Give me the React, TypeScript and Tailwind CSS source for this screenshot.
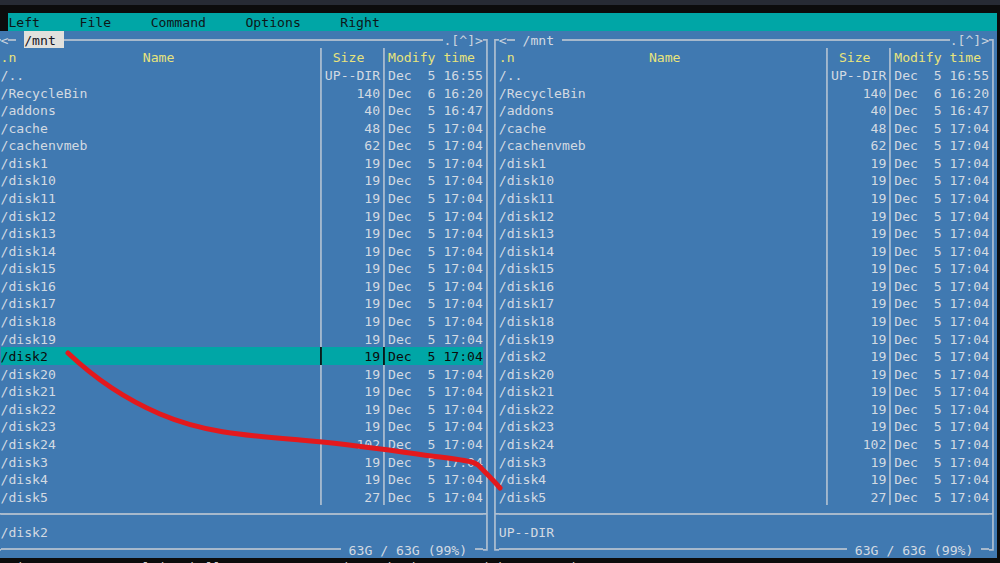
import React from 'react'

const LINE = '#aebfd1'

type K = 'v' | 'tl' | 'tr' | 'bl' | 'br' | 'lt' | 'rt'
const arms: Record<K, string> = { v: 'ud', tl: 'rd', tr: 'ld', bl: 'ru', br: 'lu', lt: 'udr', rt: 'udl' }

// one terminal cell holding a box-drawing glyph
function Box({ k, color = LINE }: { k: K; color?: string }) {
  const a = arms[k]
  const cx = 3.955
  const cy = 8.79
  const d = [
    a.includes('u') ? `M${cx} ${cy}V0` : '',
    a.includes('d') ? `M${cx} ${cy}V17.58` : '',
    a.includes('l') ? `M${cx} ${cy}H0` : '',
    a.includes('r') ? `M${cx} ${cy}H7.91` : '',
  ].join('')
  return (
    <svg width="7.91" height="17.58" viewBox="0 0 7.91 17.58" className="block shrink-0">
      <path d={d} stroke={color} strokeWidth="1.7" fill="none" strokeLinecap="square" />
    </svg>
  )
}

function HLine({ one }: { one?: boolean }) {
  return (
    <div className={one ? 'w-[7.91px] shrink-0 flex items-center' : 'flex-1 flex items-center'}>
      <div className="h-[2px] w-full bg-[#a7b9cc]" />
    </div>
  )
}

type Row = [string, string, string]

const files: Row[] = [
  ['/..', 'UP--DIR', 'Dec  5 16:55'],
  ['/RecycleBin', '140', 'Dec  6 16:20'],
  ['/addons', '40', 'Dec  5 16:47'],
  ['/cache', '48', 'Dec  5 17:04'],
  ['/cachenvmeb', '62', 'Dec  5 17:04'],
  ['/disk1', '19', 'Dec  5 17:04'],
  ...Array.from({ length: 10 }, (_, i): Row => [`/disk1${i}`, '19', 'Dec  5 17:04']),
  ['/disk2', '19', 'Dec  5 17:04'],
  ['/disk20', '19', 'Dec  5 17:04'],
  ['/disk21', '19', 'Dec  5 17:04'],
  ['/disk22', '19', 'Dec  5 17:04'],
  ['/disk23', '19', 'Dec  5 17:04'],
  ['/disk24', '102', 'Dec  5 17:04'],
  ['/disk3', '19', 'Dec  5 17:04'],
  ['/disk4', '19', 'Dec  5 17:04'],
  ['/disk5', '27', 'Dec  5 17:04'],
]

function Panel({ active, status }: { active: boolean; status: string }) {
  const nameW = active ? 'w-[316.4px]' : 'w-[324.31px]'
  const head = active ? '.n                Name' : '.n                 Name'
  return (
    <div className="flex flex-col shrink-0 bg-[#4079b1]">
      <div className="flex h-[17.58px]">
        <Box k="tl" />
        <span className="text-[#c9d3de]">{'<'}</span>
        <HLine one />
        <span className="w-[7.91px] shrink-0" />
        {active ? (
          <span className="whitespace-pre bg-[#e1e1dd] text-[#15151f]">{'/mnt '}</span>
        ) : (
          <span className="whitespace-pre">{'/mnt '}</span>
        )}
        <HLine />
        <span className="text-[#c9d3de]">{'.[^]>'}</span>
        <Box k="tr" />
      </div>

      <div className="flex h-[17.58px] text-[#e8e47c]">
        <Box k="v" />
        <div className={`${nameW} shrink-0 whitespace-pre`}>{head}</div>
        <Box k="v" />
        <div className="w-[55.37px] shrink-0 whitespace-pre">{' Size'}</div>
        <Box k="v" />
        <div className="w-[94.92px] shrink-0 whitespace-pre">Modify time</div>
        <Box k="v" />
      </div>

      {files.map(([name, size, date]) => {
        const sel = active && name === '/disk2'
        const sep = sel ? '#0c0c0c' : LINE
        return (
          <div key={name} className="flex h-[17.58px]">
            <Box k="v" />
            <div className={sel ? 'flex bg-[#00a6a6] text-[#0c0c0c]' : 'flex'}>
              <div className={`${nameW} shrink-0 whitespace-pre overflow-hidden`}>{name}</div>
              <Box k="v" color={sep} />
              <div className="w-[55.37px] shrink-0 text-right">{size}</div>
              <Box k="v" color={sep} />
              <div className="w-[94.92px] shrink-0 whitespace-pre">{date}</div>
            </div>
            <Box k="v" />
          </div>
        )
      })}

      <div className="flex h-[17.58px]">
        <Box k="lt" />
        <HLine />
        <Box k="rt" />
      </div>

      <div className="flex h-[17.58px]">
        <Box k="v" />
        <div className="flex-1 whitespace-pre">{status}</div>
        <Box k="v" />
      </div>

      <div className="flex h-[17.58px]">
        <Box k="bl" />
        <HLine />
        <span className="whitespace-pre">{' 63G / 63G (99%) '}</span>
        <HLine one />
        <Box k="br" />
      </div>
    </div>
  )
}

export default function App() {
  return (
    <div className="relative w-[1000px] h-[563px] overflow-hidden bg-[#0c0c0c] font-['DejaVu_Sans_Mono',monospace] text-[13.14px] leading-[19.5px] text-[#d3dae2]">
      <div className="h-[5px] bg-[#272b34]" />
      <div className="h-[8.2px]" />

      <div className="ml-[-7.41px] w-[1004.57px] flex flex-col">
        <div className="flex h-[17.58px]">
          <div className="w-[15.82px] shrink-0 bg-[#0c0c0c]" />
          <div className="flex-1 whitespace-pre bg-[#00a6a6] text-[#0e1618]">
            {'Left     File     Command     Options     Right'}
          </div>
        </div>

        <div className="flex">
          <Panel active status="/disk2" />
          <Panel active={false} status="UP--DIR" />
        </div>

        <div className="h-[17.58px] pl-[15.82px] whitespace-pre text-[#cccccc]">
          {'Hint: Want your plain shell? Press C-o, and get back to MC with C-o again.'}
        </div>
      </div>

      <svg className="absolute inset-0 pointer-events-none" width="1000" height="563" viewBox="0 0 1000 563">
        <path
          d="M68 353 C 88 372, 118 396, 160 414 S 240 435, 300 440 S 400 452, 440 457 S 476 463, 484 471 S 494 481, 500 488"
          stroke="#e3191d"
          strokeWidth="5"
          fill="none"
          strokeLinecap="round"
        />
      </svg>
    </div>
  )
}
